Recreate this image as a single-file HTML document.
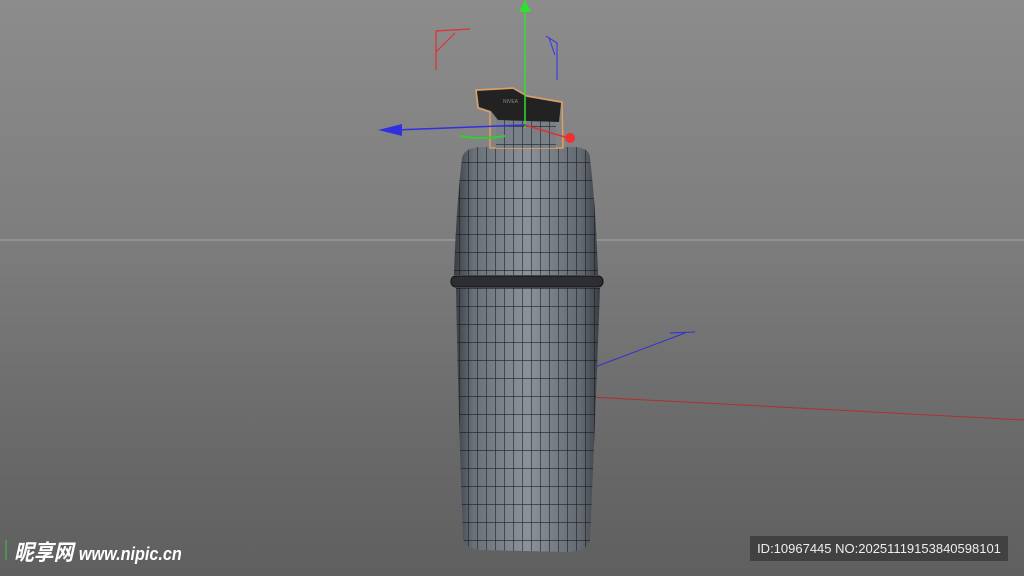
<!DOCTYPE html>
<html><head><meta charset="utf-8"><style>
html,body{margin:0;padding:0}
body{width:1024px;height:576px;overflow:hidden;background:linear-gradient(#8c8c8c 0%,#7e7e7e 40%,#6a6a6a 75%,#5f5f5f 100%);position:relative;font-family:"Liberation Sans","Noto Sans CJK SC",sans-serif}
.wm{position:absolute;left:14px;top:535px;color:#fff;font-size:22px;font-weight:bold;font-style:italic;transform:scaleX(.9);transform-origin:left}
.wm span{font-size:18px}
.id{position:absolute;left:750px;top:536px;width:258px;height:25px;background:rgba(60,60,60,.85);color:#eee;font-size:13px;line-height:25px;text-align:center}
</style></head><body>
<svg width="1024" height="576" style="position:absolute;left:0;top:0">
<defs>
<linearGradient id="b" x1="0" x2="1"><stop offset="0" stop-color="#2e3036"/><stop offset=".15" stop-color="#6a7078"/><stop offset=".5" stop-color="#8c929a"/><stop offset=".85" stop-color="#626870"/><stop offset="1" stop-color="#2e3036"/></linearGradient>
<pattern id="g" width="9" height="18" patternUnits="userSpaceOnUse"><path d="M0 0V18M0 0H9" stroke="#101114" stroke-width="1.2" fill="none"/></pattern>
<clipPath id="c1"><path d="M462 158 Q464 148 480 147 L575 147 Q590 148 590 158 Q596 210 598 275 L454 275 Q456 210 462 158Z"/></clipPath>
<clipPath id="c2"><path d="M456 288 L600 288 Q596 400 590 540 Q588 550 570 552 L480 550 Q465 548 463 538 Q458 400 456 288Z"/></clipPath>
</defs>
<line x1="0" y1="240" x2="1024" y2="240" stroke="#a8a8a8" stroke-width="1"/>
<line x1="590" y1="397" x2="1024" y2="420" stroke="#b03030" stroke-width="1"/>
<line x1="595" y1="367" x2="685" y2="333" stroke="#3030d0" stroke-width="1"/>
<line x1="670" y1="333" x2="695" y2="332" stroke="#3030d0"/>
<g clip-path="url(#c1)"><rect x="450" y="140" width="155" height="140" fill="url(#b)"/><rect x="450" y="140" width="155" height="140" fill="url(#g)" opacity=".85"/></g>
<rect x="451" y="276" width="152" height="11" rx="5" fill="#2c2e33" stroke="#111"/>
<g clip-path="url(#c2)"><rect x="450" y="285" width="155" height="270" fill="url(#b)"/><rect x="450" y="285" width="155" height="270" fill="url(#g)" opacity=".85"/></g>
<path d="M476 90 L513 88 L527 96 L562 102 L563 148 L490 148 L490 112 L478 108Z" fill="none" stroke="#e0a060" stroke-width="1.5"/>
<rect x="496" y="114" width="60" height="34" fill="#7a8088"/>
<rect x="496" y="114" width="60" height="34" fill="url(#g)" opacity=".85"/>
<path d="M477 91 L513 89 L527 97 L561 103 L559 122 L498 120 L491 111 L479 107Z" fill="#222"/>
<text x="503" y="103" font-size="5" fill="#888" font-family="Liberation Sans">NIVEA</text>
<line x1="525" y1="8" x2="525" y2="128" stroke="#30e030" stroke-width="1.5"/>
<path d="M519 12 L525 0 L531 12Z" fill="#30e030"/>
<line x1="395" y1="130" x2="525" y2="125" stroke="#3030e0" stroke-width="1.5"/>
<path d="M378 130 L402 124 L402 136Z" fill="#3030e0"/>
<line x1="525" y1="125" x2="568" y2="138" stroke="#e03030" stroke-width="1.5"/>
<circle cx="570" cy="138" r="5" fill="#f03030"/>
<path d="M460 136 Q480 140 505 136" stroke="#30d030" stroke-width="2" fill="none"/>
<path d="M436 70 L436 31 L470 29 M436 52 L455 33" stroke="#e03030" stroke-width="1.2" fill="none"/>
<path d="M546 36 L557 43 L557 80 M549 38 L555 55" stroke="#4040e0" stroke-width="1.2" fill="none"/>
<line x1="6" y1="540" x2="6" y2="560" stroke="#40c040"/>
</svg>
<div class="wm">昵享网 <span>www.nipic.cn</span></div>
<div class="id">ID:10967445 NO:20251119153840598101</div>
</body></html>
